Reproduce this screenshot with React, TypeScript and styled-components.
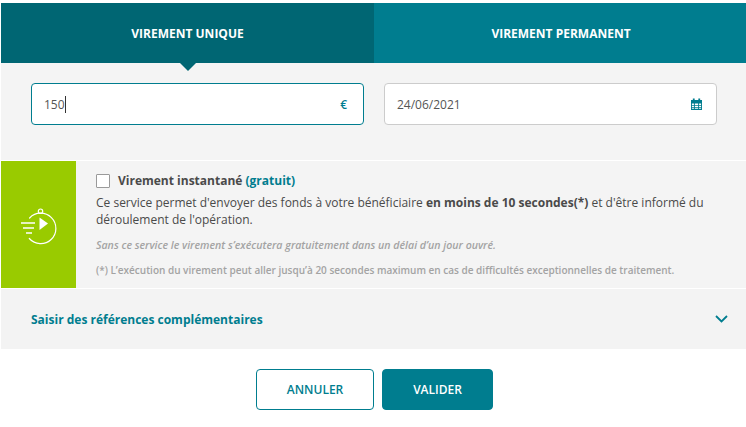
import React from "react";
import styled, { createGlobalStyle } from "styled-components";

const Global = createGlobalStyle`
  html, body { margin: 0; padding: 0; background: #fff; }
  body { font-family: "Open Sans", "Liberation Sans", sans-serif; color: #4a4a4a; }
`;

const Page = styled.div`
  width: 745px;
  height: 427px;
  margin-left: 1px;
  padding-top: 3px;
  box-sizing: border-box;
  overflow: hidden;
`;

const Tabs = styled.div`
  display: grid;
  grid-template-columns: 373px 372px;
  height: 60px;
`;

const Tab = styled.div<{ $active?: boolean }>`
  position: relative;
  display: flex;
  align-items: center;
  justify-content: center;
  padding-left: ${(p) => (p.$active ? 0 : 2)}px;
  background: ${(p) => (p.$active ? "#006673" : "#007d8f")};
  color: #fff;
  font-size: 12px;
  font-weight: 700;
  ${(p) =>
    p.$active &&
    `&::after {
      content: "";
      position: absolute;
      left: 50%;
      top: 100%;
      margin-left: -8px;
      border-left: 8px solid transparent;
      border-right: 8px solid transparent;
      border-top: 8px solid #006673;
    }`}
`;

const Fields = styled.div`
  display: flex;
  gap: 20px;
  height: 97px;
  padding: 20px 29px 0 30px;
  box-sizing: border-box;
  background: #f4f4f4;
`;

const Field = styled.div<{ $focus?: boolean }>`
  flex: 1;
  height: 42px;
  display: flex;
  align-items: center;
  justify-content: space-between;
  padding: 0 14px 0 12px;
  box-sizing: border-box;
  background: #fff;
  border: 1px solid ${(p) => (p.$focus ? "#007d8f" : "#cccccc")};
  border-radius: 4px;
  font-size: 12px;
  color: #555;
`;

const Value = styled.span`
  display: flex;
  align-items: center;
`;

const Caret = styled.span`
  display: inline-block;
  width: 1px;
  height: 17px;
  background: #333;
`;

const Unit = styled.span`
  color: #007d8f;
  font-weight: 600;
  font-size: 12px;
  margin-right: 2px;
`;

const Instant = styled.section`
  display: flex;
  height: 127px;
  margin-top: 1px;
  border-bottom: 1px solid #fff;
  background: #f4f4f4;
  box-shadow: 0 -1px 0 #fff;
`;

const IconCell = styled.div`
  flex: 0 0 75px;
  display: flex;
  align-items: flex-start;
  justify-content: flex-start;
  padding: 47px 0 0 20px;
  box-sizing: border-box;
  background: #99cb00;
`;

const InstantBody = styled.div`
  flex: 1;
  padding: 11px 40px 0 20px;
`;

const CheckRow = styled.label`
  display: flex;
  align-items: center;
  gap: 8px;
  height: 17px;
  font-size: 12px;
  font-weight: 700;
  color: #4a4a4a;
`;

const Box = styled.span`
  width: 12px;
  height: 12px;
  background: #fff;
  border: 1px solid #9a9a9a;
  border-radius: 1px;
`;

const Free = styled.span`
  color: #007d8f;
`;

const Description = styled.p`
  margin: 5px 0 0;
  font-size: 12px;
  line-height: 17px;
  color: #4a4a4a;
`;

const Notice = styled.p`
  margin: 10px 0 0;
  font-size: 10.6px;
  line-height: 14px;
  font-weight: 600;
  font-style: italic;
  color: #a3a3a3;
`;

const Footnote = styled.p`
  margin: 11px 0 0;
  font-size: 10px;
  line-height: 14px;
  font-weight: 600;
  color: #a3a3a3;
`;

const Disclosure = styled.div`
  display: flex;
  align-items: center;
  justify-content: space-between;
  height: 60px;
  padding: 0 18px 0 30px;
  background: #f3f3f3;
  color: #007d8f;
  font-size: 12px;
  font-weight: 700;
`;

const Actions = styled.div`
  display: flex;
  justify-content: center;
  gap: 8px;
  padding: 20px 0 0 2px;
`;

const Button = styled.button<{ $primary?: boolean; $width: number }>`
  width: ${(p) => p.$width}px;
  height: 41px;
  padding: 0;
  border: 1px solid #007d8f;
  border-radius: 4px;
  background: ${(p) => (p.$primary ? "#007d8f" : "#fff")};
  color: ${(p) => (p.$primary ? "#fff" : "#007d8f")};
  font-family: inherit;
  font-size: 12px;
  font-weight: 600;
`;

const Stopwatch = () => (
  <svg width="36" height="37" viewBox="0 0 36 37" fill="none" stroke="#fff" strokeWidth="1.2">
    <circle cx="19.5" cy="3.2" r="2.2" />
    <path d="M8.6 10 A15.2 15.2 0 1 1 8.3 30.5" strokeLinecap="round" />
    <path d="M18.5 9.5 L27 15.5 L18.5 22 Z" fill="#fff" stroke="none" />
    <path d="M0 15 H14 M2 20 H13 M5 25 H11" strokeWidth="1.4" />
  </svg>
);

const Calendar = () => (
  <svg width="11" height="12" viewBox="0 0 12 13">
    <path
      fill="#007d8f"
      fillRule="evenodd"
      d="M0 2h2V0.5h2V2h4V0.5h2V2h2v11H0V2zM1 6v1.5h2.2V6H1zm3.2 0v1.5h3.6V6H4.2zm4.6 0v1.5H11V6H8.8zM1 8.500V10h2.2V8.5H1zm3.2 0V10h3.6V8.5H4.2zm4.6 0V10H11V8.5H8.8zM1 11v1h2.2v-1H1zm3.2 0v1h3.6v-1H4.2zm4.6 0v1H11v-1H8.8z"
    />
  </svg>
);

const Chevron = () => (
  <svg width="13" height="8" viewBox="0 0 13 8" fill="none" stroke="#007d8f" strokeWidth="1.8">
    <path d="M1 1l5.5 5.5L12 1" />
  </svg>
);

export default function App() {
  return (
    <Page>
      <Global />
      <Tabs>
        <Tab $active>VIREMENT UNIQUE</Tab>
        <Tab>VIREMENT PERMANENT</Tab>
      </Tabs>
      <Fields>
        <Field $focus>
          <Value>
            150
            <Caret />
          </Value>
          <Unit>€</Unit>
        </Field>
        <Field>
          <Value>24/06/2021</Value>
          <Calendar />
        </Field>
      </Fields>
      <Instant>
        <IconCell>
          <Stopwatch />
        </IconCell>
        <InstantBody>
          <CheckRow>
            <Box />
            <span>
              Virement instantané <Free>(gratuit)</Free>
            </span>
          </CheckRow>
          <Description>
            Ce service permet d'envoyer des fonds à votre bénéficiaire <b>en moins de 10 secondes(*)</b> et d'être
            informé du déroulement de l'opération.
          </Description>
          <Notice>Sans ce service le virement s’exécutera gratuitement dans un délai d’un jour ouvré.</Notice>
          <Footnote>
            (*) L’exécution du virement peut aller jusqu’à 20 secondes maximum en cas de difficultés exceptionnelles de
            traitement.
          </Footnote>
        </InstantBody>
      </Instant>
      <Disclosure>
        <span>Saisir des références complémentaires</span>
        <Chevron />
      </Disclosure>
      <Actions>
        <Button $width={118}>ANNULER</Button>
        <Button $width={111} $primary>
          VALIDER
        </Button>
      </Actions>
    </Page>
  );
}
